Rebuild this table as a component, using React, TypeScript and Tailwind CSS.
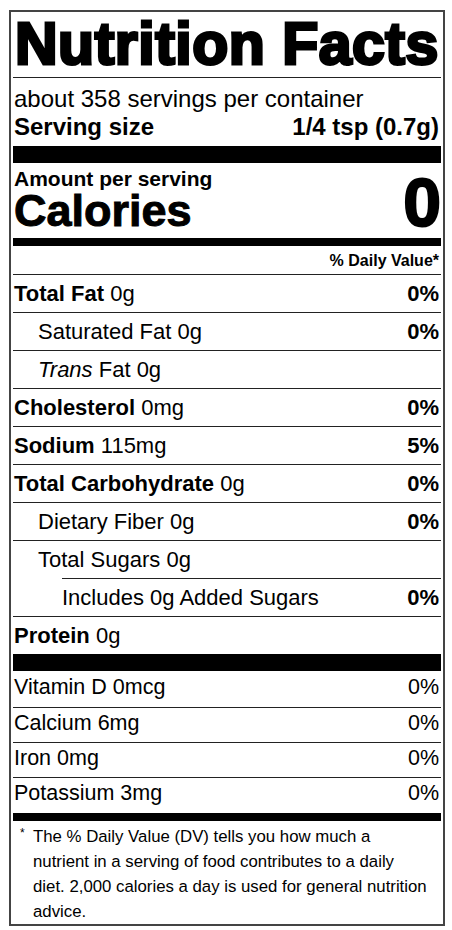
const nutrients = [
  { label: 'Total Fat', amount: '0g', dv: '0%', bold: true, indent: 0 },
  { label: 'Saturated Fat', amount: '0g', dv: '0%', bold: false, indent: 1 },
  { label: 'Trans', amount: '0g', dv: '', bold: false, indent: 1, trans: true },
  { label: 'Cholesterol', amount: '0mg', dv: '0%', bold: true, indent: 0 },
  { label: 'Sodium', amount: '115mg', dv: '5%', bold: true, indent: 0 },
  { label: 'Total Carbohydrate', amount: '0g', dv: '0%', bold: true, indent: 0 },
  { label: 'Dietary Fiber', amount: '0g', dv: '0%', bold: false, indent: 1 },
  { label: 'Total Sugars', amount: '0g', dv: '', bold: false, indent: 1 },
  { label: 'Includes 0g Added Sugars', amount: '', dv: '0%', bold: false, indent: 2 },
  { label: 'Protein', amount: '0g', dv: '', bold: true, indent: 0 },
]

const vitamins = [
  { label: 'Vitamin D 0mcg', dv: '0%', cls: 'h-[36px] pt-[4px]' },
  { label: 'Calcium 6mg', dv: '0%', cls: 'h-[35px] pt-[3px] border-t border-[#222]' },
  { label: 'Iron 0mg', dv: '0%', cls: 'h-[35px] pt-[3px] border-t border-[#222]' },
  { label: 'Potassium 3mg', dv: '0%', cls: 'h-[36px] pt-[3px] border-t border-[#222]' },
]

function NutrientRow({ n }: { n: (typeof nutrients)[number] }) {
  const indentCls = n.indent === 2 ? 'ml-[49px]' : n.indent === 1 ? 'pl-[25px]' : 'pl-[1px]'
  return (
    <div
      className={`flex h-[38px] items-start justify-between border-t border-[#222] pt-[7px] pr-[2px] text-[22px] leading-[24px] ${indentCls}`}
    >
      <span>
        {n.trans ? (
          <>
            <i>Trans</i> Fat {n.amount}
          </>
        ) : n.bold ? (
          <>
            <b>{n.label}</b> {n.amount}
          </>
        ) : (
          <>
            {n.label}
            {n.amount && ` ${n.amount}`}
          </>
        )}
      </span>
      {n.dv && <b>{n.dv}</b>}
    </div>
  )
}

export default function App() {
  return (
    <div className="min-h-[930px] bg-white pt-[10px] pl-[9px] font-['Liberation_Sans',Arial,sans-serif] text-black">
      <div className="w-[436px] border-2 border-[#444] px-[2px]">
        {/* Title */}
        <div className="border-b border-[#222] pt-[2px] pb-[3px]">
          <h1 className="text-[59px] leading-[60px] font-black pl-[2px] tracking-[0.5px] [-webkit-text-stroke:3px_black]">
            Nutrition Facts
          </h1>
        </div>

        {/* Servings */}
        <div className="pt-[7px] pb-[5px] pl-[1px] pr-[2px] text-[24px] leading-[28px]">
          <p>about 358 servings per container</p>
          <div className="flex justify-between font-bold">
            <span>Serving size</span>
            <span>1/4 tsp (0.7g)</span>
          </div>
        </div>
        <div className="h-[17px] bg-black" />

        {/* Calories */}
        <div className="flex items-end justify-between pt-[6px] pb-[4px] pl-[1px]">
          <div className="font-bold">
            <p className="text-[21px] leading-[19px]">Amount per serving</p>
            <p className="text-[45px] leading-[46px] [-webkit-text-stroke:1px_black]">Calories</p>
          </div>
          <span className="text-[68px] leading-[63px] font-bold [-webkit-text-stroke:2px_black]">0</span>
        </div>
        <div className="h-[8px] bg-black" />

        <div className="pt-[6px] pb-[4px] pr-[2px] text-right text-[16px] leading-[18px] font-bold">
          % Daily Value*
        </div>

        {nutrients.map((n) => (
          <NutrientRow key={n.label} n={n} />
        ))}
        <div className="h-[17px] bg-black" />

        {vitamins.map((v) => (
          <div
            key={v.label}
            className={`flex items-start justify-between pl-[1px] pr-[2px] text-[21.5px] leading-[24px] ${v.cls}`}
          >
            <span>{v.label}</span>
            <span>{v.dv}</span>
          </div>
        ))}
        <div className="h-[8px] bg-black" />

        {/* Footnote */}
        <p className="pt-[3px] pl-[20px] pr-[2px] -indent-[13px] text-[16.8px] leading-[25px]">
          <span className="inline-block w-[13px] indent-0 align-top text-[12px] leading-[18px]">*</span>
          The % Daily Value (DV) tells you how much a<br />
          nutrient in a serving of food contributes to a daily
          <br />
          diet. 2,000 calories a day is used for general nutrition
          <br />
          advice.
        </p>
      </div>
    </div>
  )
}
